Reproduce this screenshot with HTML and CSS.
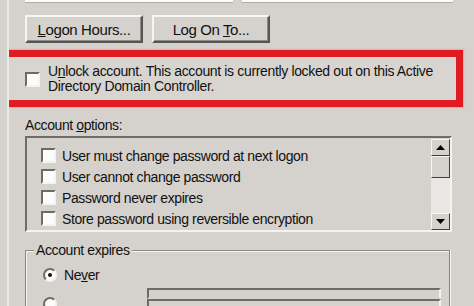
FILE: index.html
```html
<!DOCTYPE html>
<html>
<head>
<meta charset="utf-8">
<link rel="stylesheet" href="styles.css">
</head>
<body>
<div class="page">
  <div class="top-fields">
    <div class="field f1"></div>
    <div class="field f2"></div>
  </div>
  <div class="buttons">
    <button class="btn"><u>L</u>ogon Hours...</button>
    <button class="btn"><span>Log On <u>T</u>o...</span></button>
  </div>
  <div class="unlock">
    <span class="cb"></span>
    <p class="unlock-text">U<u>n</u>lock account. This account is currently locked out on this Active<br>Directory Domain Controller.</p>
  </div>
  <div class="label">Account <u>o</u>ptions:</div>
  <div class="listbox">
    <ul class="items">
      <li><span class="cb small"></span>User must change password at next logon</li>
      <li><span class="cb small"></span>User cannot change password</li>
      <li><span class="cb small"></span>Password never expires</li>
      <li><span class="cb small"></span>Store password using reversible encryption</li>
    </ul>
    <div class="scrollbar">
      <div class="sb-btn"><svg width="9" height="5" viewBox="0 0 9 5"><path d="M4.5 0 L9 5 L0 5 Z" fill="#000"/></svg></div>
      <div class="sb-thumb"></div>
      <div class="sb-track"></div>
      <div class="sb-btn"><svg width="9" height="5" viewBox="0 0 9 5"><path d="M0 0 L9 0 L4.5 5 Z" fill="#000"/></svg></div>
    </div>
  </div>
  <div class="group">
    <div class="legend">Account expires</div>
    <div class="radio-row"><span class="radio on"></span>Ne<u>v</u>er</div>
    <div class="radio-row second"><span class="radio"></span><div class="date-boxes"><div class="date-box"></div><div class="date-box"></div></div></div>
  </div>
</div>
</body>
</html>
```
FILE: styles.css
```css
html, body {
  margin: 0;
  padding: 0;
  background: #d5d2cd;
  overflow: hidden;
  height: 306px;
}
body {
  font-family: "Liberation Sans", Arial, sans-serif;
  font-size: 14px;
  color: #111;
}
.page {
  margin-left: 7px;
  border-left: 2px solid #eceae6;
  padding-left: 16px;
  height: 306px;
  width: 440px;
  overflow: hidden;
}
.top-fields {
  display: flex;
  gap: 9px;
  height: 3px;
}
.field {
  background: #fbfbfa;
  border-bottom: 1px solid #b0aea9;
  height: 2px;
}
.f1 { width: 208px; }
.f2 { width: 211px; }
.buttons {
  display: flex;
  gap: 9px;
  margin-top: 12px;
}
.btn {
  width: 118px;
  height: 28px;
  background: #d5d2cd;
  border: 2px solid;
  border-color: #f6f5f3 #555 #555 #f6f5f3;
  box-shadow: inset -1px -1px 0 #8d8a85;
  font-family: inherit;
  font-size: 15px;
  color: #111;
  padding: 0;
  letter-spacing: -0.4px;
}
.unlock {
  margin-left: -25px;
  margin-top: 7px;
  width: 449px;
  height: 43px;
  border: 7px solid #e11b22;
  box-shadow: 0 0 1px 1px #f2a6a6;
  display: flex;
  align-items: center;
  background: #d8d5d0;
}
.cb {
  display: inline-block;
  width: 11px;
  height: 11px;
  background: #fbfbfa;
  border: 2px solid;
  border-color: #6e6b67 #f4f3f1 #f4f3f1 #6e6b67;
  flex: none;
}
.unlock .cb {
  margin-left: 18px;
  margin-top: 2px;
}
.unlock-text {
  margin: 0 0 0 8px;
  line-height: 15px;
  font-size: 14px;
  letter-spacing: -0.35px;
}
.label {
  margin-top: 10px;
  line-height: 16px;
  letter-spacing: -0.4px;
}
.listbox {
  margin-top: 3px;
  width: 423px;
  height: 92px;
  border: 2px solid;
  border-color: #6f6c68 #f4f3f1 #f4f3f1 #6f6c68;
  display: flex;
  justify-content: space-between;
}
.items {
  list-style: none;
  margin: 0;
  padding: 7px 0 0 14px;
}
.items li {
  display: flex;
  align-items: center;
  height: 21px;
  letter-spacing: -0.4px;
}
.items .cb {
  margin-right: 6px;
}
.scrollbar {
  width: 19px;
  display: flex;
  flex-direction: column;
  margin-top: 1px;
}
.sb-btn, .sb-thumb {
  box-sizing: border-box;
  background: #d5d2cd;
  border: 1px solid;
  border-color: #f6f5f3 #404040 #404040 #f6f5f3;
  display: flex;
  align-items: center;
  justify-content: center;
}
.sb-btn { height: 17px; }
.sb-thumb { height: 22px; }
.sb-track {
  flex: 1;
  background: #e9e7e3;
}
.group {
  margin-top: 18px;
  width: 425px;
  height: 60px;
  border-top: 1px solid #8a8782;
  border-left: 1px solid #8a8782;
  border-right: 1px solid #8a8782;
  box-shadow: inset 1px 1px 0 #f6f5f3, 1px 0 0 #f6f5f3;
  position: relative;
  padding-left: 17px;
  box-sizing: border-box;
}
.legend {
  position: absolute;
  top: -9px;
  left: 8px;
  padding: 0 2px;
  background: #d5d2cd;
  line-height: 16px;
  letter-spacing: -0.4px;
}
.radio-row {
  display: flex;
  align-items: center;
  margin-top: 16px;
  height: 16px;
  letter-spacing: -0.4px;
}
.radio {
  width: 10px;
  height: 10px;
  border-radius: 50%;
  background: #fbfbfa;
  border: 2px solid;
  border-color: #6e6b67 #f4f3f1 #f4f3f1 #6e6b67;
  margin-right: 7px;
  display: flex;
  align-items: center;
  justify-content: center;
  flex: none;
}
.radio.on::after {
  content: "";
  width: 4px;
  height: 4px;
  border-radius: 50%;
  background: #111;
}
.radio-row.second {
  margin-top: 5px;
  align-items: flex-start;
}
.radio-row.second .radio {
  margin-top: 9px;
}
.date-boxes {
  margin-left: 83px;
  display: flex;
  flex-direction: column;
}
.date-box {
  width: 290px;
  height: 7px;
  border: 2px solid;
  border-color: #6e6b67 #f4f3f1 transparent #6e6b67;
}
```
